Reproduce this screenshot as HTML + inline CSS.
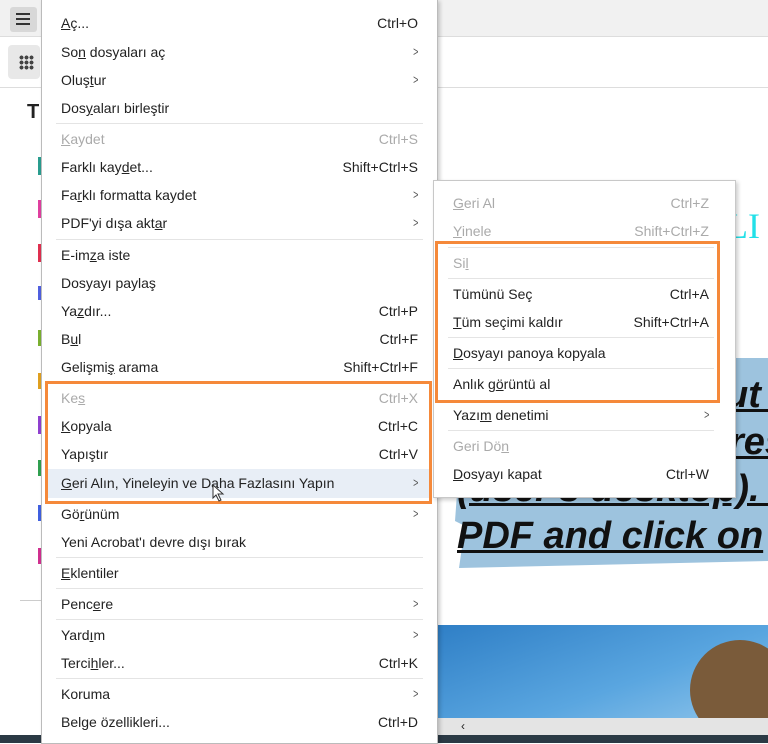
<!DOCTYPE html>
<html><head><meta charset="utf-8"><style>
*{margin:0;padding:0;box-sizing:border-box}
body{width:768px;height:743px;overflow:hidden;position:relative;background:#fff;font-family:"Liberation Sans",sans-serif;font-size:14px;color:#222}
.a{position:absolute}
.it{position:absolute;height:22px;line-height:22px;white-space:nowrap}
.sc{position:absolute;height:22px;line-height:22px;text-align:right;white-space:nowrap}
.g{color:#aaa}
.sep{position:absolute;height:1px;background:#e4e4e4}
.ar{position:absolute;font-size:13px;color:#555;height:22px;line-height:22px;transform:scaleX(.7)}
u{text-decoration:underline}
</style></head><body>
<div class="a" style="left:0;top:0;width:768px;height:37px;background:#f1f1f1;border-bottom:1px solid #ddd"></div>
<div class="a" style="left:10px;top:7px;width:27px;height:25px;background:#d8d8d8;border-radius:3px"></div>
<div class="a" style="left:16px;top:13px;width:14px;height:2px;background:#333;box-shadow:0 5px 0 #333,0 10px 0 #333"></div>
<div class="a" style="left:0;top:37px;width:768px;height:51px;background:#fff;border-bottom:1px solid #ddd"></div>
<div class="a" style="left:8px;top:45px;width:32px;height:34px;background:#e8e8e8;border-radius:4px"></div>
<div class="a" style="left:19px;top:55px;width:15px;height:15px;background:radial-gradient(circle,#444 1.8px,transparent 2.1px) 0 0/5px 5px"></div>
<div class="a" style="left:27px;top:101px;font-size:20px;font-weight:bold">T</div>
<div class="a" style="left:38px;top:157px;width:3px;height:18px;background:#2a9d8f"></div>
<div class="a" style="left:38px;top:200px;width:3px;height:18px;background:#e040a0"></div>
<div class="a" style="left:38px;top:244px;width:3px;height:18px;background:#e03050"></div>
<div class="a" style="left:38px;top:286px;width:3px;height:14px;background:#5060e0"></div>
<div class="a" style="left:38px;top:330px;width:3px;height:16px;background:#7ab030"></div>
<div class="a" style="left:38px;top:373px;width:3px;height:16px;background:#e0a020"></div>
<div class="a" style="left:38px;top:416px;width:3px;height:18px;background:#9040d0"></div>
<div class="a" style="left:38px;top:460px;width:3px;height:16px;background:#30a050"></div>
<div class="a" style="left:38px;top:505px;width:3px;height:16px;background:#4060e0"></div>
<div class="a" style="left:38px;top:548px;width:3px;height:16px;background:#d03090"></div>
<div class="a" style="left:20px;top:600px;width:21px;height:1px;background:#ccc"></div>
<div class="a" style="left:700px;top:205px;font-family:'Liberation Serif',serif;font-size:36px;color:#22e0e8">VLI</div>
<svg class="a" style="left:437px;top:356px" width="331" height="215"><polygon points="30,2 331,2 331,205 22,212 28,170 18,165 30,0" fill="#9dc3de"/></svg>
<div class="a" style="left:457px;top:372px;width:313px;font-size:38px;font-weight:bold;font-style:italic;line-height:47px;color:#111;white-space:nowrap;text-decoration:underline">
<div style="padding-left:268px">ut l</div><div style="padding-left:272px">res</div><div>(user's desktop). I</div><div>PDF and click on</div></div>
<div class="a" style="left:437px;top:625px;width:331px;height:93px;background:linear-gradient(160deg,#2f7fc6,#5aa6e0 60%,#8ec4ea)"></div>
<div class="a" style="left:690px;top:640px;width:100px;height:100px;border-radius:50%;background:#7a5b3a"></div>
<div class="a" style="left:437px;top:718px;width:331px;height:17px;background:#e4e4e4"></div>
<div class="a" style="left:461px;top:718px;font-size:12px;line-height:17px">‹</div>
<div class="a" style="left:0;top:735px;width:768px;height:8px;background:#2b3a45"></div>
<div class="a" style="left:41px;top:-1px;width:397px;height:745px;background:#fff;border:1px solid #bbb;box-shadow:2px 2px 4px rgba(0,0,0,.2)"></div>
<div class="a" style="left:47px;top:469px;width:382px;height:29px;background:#e8eef6"></div>
<div id="m"></div>
<div class="a" style="left:433px;top:180px;width:303px;height:318px;background:#fff;border:1px solid #c8c8c8;box-shadow:2px 2px 4px rgba(0,0,0,.2)"></div>
<div id="s"></div>
<div class="a" style="left:45px;top:381px;width:387px;height:123px;border:3px solid #f5893a"></div>
<div class="a" style="left:435px;top:241px;width:285px;height:162px;border:3px solid #f5893a"></div>
<svg class="a" style="left:212px;top:484px" width="14" height="18"><path d="M1,1 L1,14 L4,11 L7,17 L9,16 L6,10 L11,10 Z" fill="#fff" stroke="#333"/></svg>
<script>
function build(id,x,r,items,seps){var h='';items.forEach(function(i){var c=i[3]?' g':'';h+='<div class="it'+c+'" style="left:'+x+'px;top:'+(i[0]-10)+'px">'+i[1]+'</div>';if(i[2]==='>')h+='<div class="ar" style="left:'+(r-6)+'px;top:'+(i[0]-10)+'px">&gt;</div>';else if(i[2])h+='<div class="sc'+c+'" style="right:'+(768-r)+'px;top:'+(i[0]-10)+'px">'+i[2]+'</div>';});seps.forEach(function(s){h+='<div class="sep" style="left:'+(x-5)+'px;width:'+(r-x+10)+'px;top:'+s+'px"></div>'});document.getElementById(id).innerHTML=h;}
build('m',61,418,[[22,'<u>A</u>ç...','Ctrl+O'],[51,'So<u>n</u> dosyaları aç','>'],[79,'Oluş<u>t</u>ur','>'],[107,'Dos<u>y</u>aları birleştir'],[138,'<u>K</u>aydet','Ctrl+S',1],[166,'Farklı kay<u>d</u>et...','Shift+Ctrl+S'],[194,'Fa<u>r</u>klı formatta kaydet','>'],[222,"PDF'yi dışa akt<u>a</u>r",'>'],[254,'E-im<u>z</u>a iste'],[282,'Dosyayı paylaş'],[310,'Ya<u>z</u>dır...','Ctrl+P'],[338,'B<u>u</u>l','Ctrl+F'],[366,'Gelişmi<u>ş</u> arama','Shift+Ctrl+F'],[397,'Ke<u>s</u>','Ctrl+X',1],[425,'<u>K</u>opyala','Ctrl+C'],[453,'Yapıştır','Ctrl+V'],[482,'<u>G</u>eri Alın, Yineleyin ve Daha Fazlasını Yapın','>'],[513,'Gö<u>r</u>ünüm','>'],[541,"Yeni Acrobat'ı devre dışı bırak"],[572,'<u>E</u>klentiler'],[603,'Penc<u>e</u>re','>'],[634,'Yard<u>ı</u>m','>'],[662,'Terci<u>h</u>ler...','Ctrl+K'],[693,'Koruma','>'],[721,'Bel<u>g</u>e özellikleri...','Ctrl+D']],[123,239,381,557,588,619,678]);
build('s',453,709,[[202,'<u>G</u>eri Al','Ctrl+Z',1],[230,'<u>Y</u>inele','Shift+Ctrl+Z',1],[262,'Si<u>l</u>','',1],[293,'Tümünü Seç','Ctrl+A'],[321,'<u>T</u>üm seçimi kaldır','Shift+Ctrl+A'],[352,'<u>D</u>osyayı panoya kopyala'],[383,'Anlık g<u>ö</u>rüntü al'],[414,'Yazı<u>m</u> denetimi','>'],[445,'Geri Dö<u>n</u>','',1],[473,'<u>D</u>osyayı kapat','Ctrl+W']],[247,278,337,368,430]);
</script>
</body></html>
